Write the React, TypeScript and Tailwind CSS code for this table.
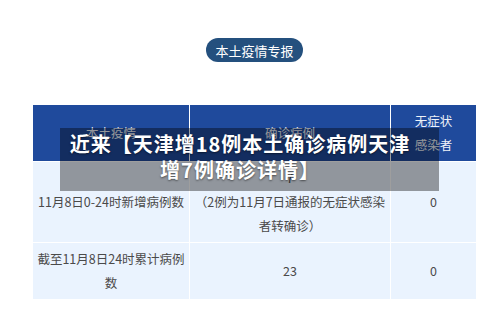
const cell =
  "flex items-center justify-center text-center bg-[#eaf3fe] text-[#4a4a4a] text-[12.5px] leading-[24px]";
const head =
  "flex items-center justify-center text-center bg-[#1f4a9c] text-[#eef2f8] text-[12.5px] leading-[24px]";

export default function App() {
  return (
    <div
      className="flex h-[320px] w-[500px] flex-col items-center bg-white pl-[9px]"
      style={{ fontFamily: '"Noto Sans CJK SC", "Noto Sans", sans-serif' }}
    >
      <div className="mt-[38px] flex h-[24px] items-center rounded-full bg-[#24507e] px-[9px] text-[13px] leading-none text-white">
        本土疫情专报
      </div>

      <div className="relative mt-[43px]">
        <div className="grid grid-cols-[156px_200px_85px] grid-rows-[56px_80px_56px] gap-px bg-white">
          <div className={head}>本土疫情</div>
          <div className={head}>确诊病例</div>
          <div className={head}>
            无症状
            <br />
            感染者
          </div>

          <div className={cell}>11月8日0-24时新增病例数</div>
          <div className={cell}>
            <p>
              7
              <br />
              （2例为11月7日通报的无症状感染
              <br />
              者转确诊）
            </p>
          </div>
          <div className={cell}>0</div>

          <div className={cell}>
            <p>
              截至11月8日24时累计病例
              <br />
              数
            </p>
          </div>
          <div className={cell}>23</div>
          <div className={cell}>0</div>
        </div>

        <div className="absolute left-[27px] top-[23px] h-[63px] w-[379px] bg-[rgba(0,0,0,0.38)] pr-[19px] pt-[3px]">
          <p className="whitespace-nowrap text-center text-[20px] font-bold leading-[26px] tracking-[1px] text-white [text-shadow:0_1px_2px_rgba(0,0,0,0.5)]">
            近来【天津增18例本土确诊病例天津
            <br />
            增7例确诊详情】
          </p>
        </div>
      </div>
    </div>
  );
}
